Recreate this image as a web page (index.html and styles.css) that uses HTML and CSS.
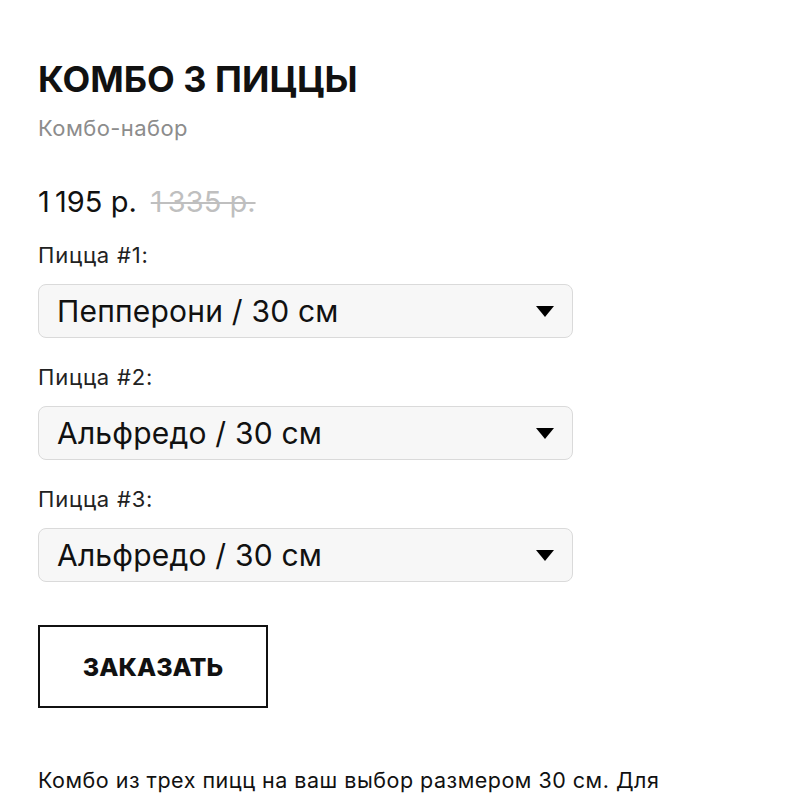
FILE: index.html
```html
<!DOCTYPE html>
<html lang="ru">
<head>
<meta charset="utf-8">
<link rel="stylesheet" href="styles.css">
</head>
<body>
<main class="product">
  <h1 class="title">КОМБО 3 ПИЦЦЫ</h1>
  <div class="subtitle">Комбо-набор</div>
  <div class="prices">
    <span class="price">1&#8201;195 р.</span>
    <span class="old-price">1&#8201;335 р.</span>
  </div>
  <div class="options">
    <div class="option">
      <div class="label">Пицца #1:</div>
      <div class="select"><span>Пепперони / 30 см</span><svg class="arrow" width="18" height="11" viewBox="0 0 18 11"><path d="M0 0H18L9 11Z" fill="#000"/></svg></div>
    </div>
    <div class="option">
      <div class="label">Пицца #2:</div>
      <div class="select"><span>Альфредо / 30 см</span><svg class="arrow" width="18" height="11" viewBox="0 0 18 11"><path d="M0 0H18L9 11Z" fill="#000"/></svg></div>
    </div>
    <div class="option">
      <div class="label">Пицца #3:</div>
      <div class="select"><span>Альфредо / 30 см</span><svg class="arrow" width="18" height="11" viewBox="0 0 18 11"><path d="M0 0H18L9 11Z" fill="#000"/></svg></div>
    </div>
  </div>
  <button class="order">ЗАКАЗАТЬ</button>
  <p class="desc">Комбо из трех пицц на ваш выбор размером 30 см. Для компании друзей или большой семьи.</p>
</main>
</body>
</html>
```
FILE: styles.css
```css
* { box-sizing: border-box; }
body {
  margin: 0;
  background: #fff;
  color: #111;
  font-family: Inter, "Noto Sans", sans-serif;
}
.product {
  padding: 57px 38px 0 38px;
  width: 762px;
}
.title {
  margin: 0;
  font-size: 36px;
  font-weight: 700;
  line-height: 44px;
  color: #111;
}
.subtitle {
  margin-top: 13px;
  font-size: 22px;
  line-height: 28px;
  letter-spacing: 0.4px;
  color: #8c8c8c;
}
.prices {
  margin-top: 42px;
  display: flex;
  align-items: baseline;
  gap: 14px;
  line-height: 36px;
}
.price {
  font-size: 29px;
  color: #111;
}
.old-price {
  font-size: 29px;
  color: #bfbfbf;
  text-decoration: line-through;
  text-decoration-thickness: 2px;
}
.options {
  margin-top: 22px;
  display: flex;
  flex-direction: column;
  gap: 26px;
  width: 535px;
}
.label {
  font-size: 22px;
  line-height: 26px;
  letter-spacing: 0.8px;
  color: #222;
}
.select {
  margin-top: 16px;
  height: 54px;
  display: flex;
  align-items: center;
  justify-content: space-between;
  padding: 0 18px 0 18px;
  background: #f7f7f7;
  border: 1px solid #dadada;
  border-radius: 8px;
  font-size: 30px;
  letter-spacing: 0.2px;
  color: #111;
}
.arrow { display: block; }
.order {
  display: block;
  margin-top: 43px;
  width: 230px;
  height: 83px;
  background: #fff;
  border: 2px solid #111;
  font-family: inherit;
  font-size: 25px;
  font-weight: 800;
  color: #111;
  padding: 0;
}
.desc {
  margin: 56px 0 0 0;
  max-width: 690px;
  font-size: 21.5px;
  line-height: 32px;
  letter-spacing: 0.5px;
  color: #111;
}
```
